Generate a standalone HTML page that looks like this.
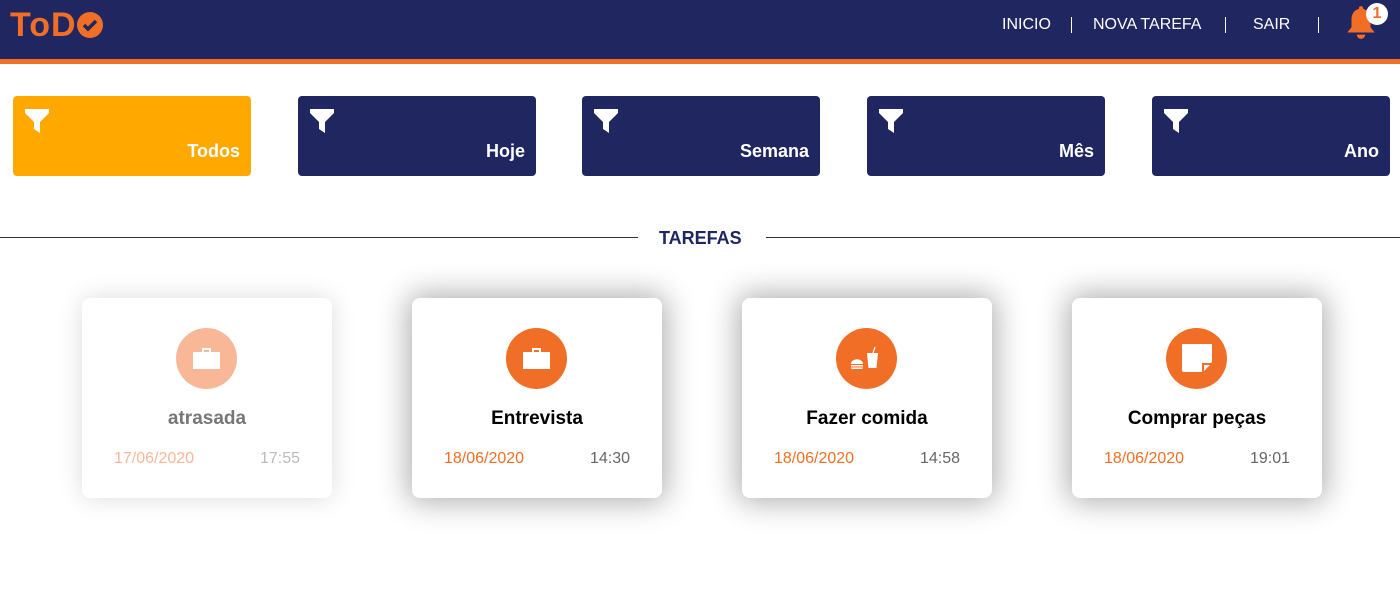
<!DOCTYPE html>
<html><head><meta charset="utf-8"><style>
*{margin:0;padding:0;box-sizing:border-box}
body{width:1400px;height:593px;background:#fff;font-family:"Liberation Sans",sans-serif;position:relative;overflow:hidden}
.hdr{position:absolute;left:0;top:0;width:1400px;background:#1f2660;border-bottom:5px solid #f06e26;height:64px}
.logo{position:absolute;left:10px;top:6px;font-size:34px;font-weight:bold;color:#f06e26;letter-spacing:1px}
.nav{position:absolute;top:16px;color:#fff;font-size:16px}
.sep{position:absolute;top:17px;width:1px;height:16px;background:#fff}
.f{position:absolute;top:96px;width:238px;height:80px;background:#1f2660;border-radius:4px;color:#fff;font-weight:bold;font-size:18px}
.f span{position:absolute;right:11px;bottom:14px}
.f svg{position:absolute;left:11px;top:12px}
.line{position:absolute;top:237px;height:1px;background:#333}
.card{position:absolute;top:298px;width:250px;height:200px;background:#fff;border-radius:8px;box-shadow:0 0 30px 4px rgba(0,0,0,.32);text-align:center}
.card .c{position:absolute;left:94px;top:30px;width:61px;height:61px;border-radius:50%;background:#f06e26}
.card .c svg{position:absolute;left:15px;top:15px}
.card h3{position:absolute;left:0;right:0;top:110px;font-size:19px;color:#000}
.card .d{position:absolute;left:32px;top:152px;font-size:16px;color:#f06e26}
.card .t{position:absolute;right:32px;top:152px;font-size:16px;color:#666}
</style></head><body>
<div class="hdr">
<div class="logo">ToD<svg width="26" height="26" viewBox="0 0 26 26" style="vertical-align:-2px"><circle cx="13" cy="13" r="13" fill="#f06e26"/><path d="M7 13l4 4 8-8" stroke="#1f2660" stroke-width="3.5" fill="none"/></svg></div>
<div class="nav" style="left:1002px">INICIO</div><div class="sep" style="left:1071px"></div>
<div class="nav" style="left:1093px">NOVA TAREFA</div><div class="sep" style="left:1225px"></div>
<div class="nav" style="left:1253px">SAIR</div><div class="sep" style="left:1318px"></div>
<svg style="position:absolute;left:1343px;top:4px" width="36" height="38" viewBox="0 0 32 36"><path d="M16 2c-1.5 0-2 1-2 2.5C9 6 7 10 7 15v7l-4 5h26l-4-5v-7c0-5-2-9-7-10.5C18 3 17.5 2 16 2z" fill="#f06e26"/><path d="M12 29a4 4 0 0 0 8 0z" fill="#f06e26"/></svg>
<div style="position:absolute;left:1366px;top:3px;width:22px;height:22px;border-radius:50%;background:#fff;color:#f06e26;font-weight:bold;font-size:16px;text-align:center;line-height:22px">1</div>
</div>
<div class="f" style="left:13px;background:#ffa800"><svg width="26" height="26" viewBox="0 0 26 26"><path d="M1 1h24v4l-9 9v11l-6-4v-7L1 5z" fill="#fff"/></svg><span>Todos</span></div>
<div class="f" style="left:298px"><svg width="26" height="26" viewBox="0 0 26 26"><path d="M1 1h24v4l-9 9v11l-6-4v-7L1 5z" fill="#fff"/></svg><span>Hoje</span></div>
<div class="f" style="left:582px"><svg width="26" height="26" viewBox="0 0 26 26"><path d="M1 1h24v4l-9 9v11l-6-4v-7L1 5z" fill="#fff"/></svg><span>Semana</span></div>
<div class="f" style="left:867px"><svg width="26" height="26" viewBox="0 0 26 26"><path d="M1 1h24v4l-9 9v11l-6-4v-7L1 5z" fill="#fff"/></svg><span>Mês</span></div>
<div class="f" style="left:1152px"><svg width="26" height="26" viewBox="0 0 26 26"><path d="M1 1h24v4l-9 9v11l-6-4v-7L1 5z" fill="#fff"/></svg><span>Ano</span></div>
<div class="line" style="left:0;width:638px"></div>
<div style="position:absolute;left:659px;top:228px;font-size:18px;font-weight:bold;color:#1f2660">TAREFAS</div>
<div class="line" style="left:766px;width:634px"></div>

<div class="card" style="left:82px;box-shadow:0 0 25px rgba(0,0,0,.14)"><div class="c" style="background:#f8b796"><svg width="31" height="31" viewBox="0 0 31 31"><path d="M11 5h9v4h-2v-2h-5v2h-2z M2 9h27v17H2z" fill="#fff"/></svg></div><h3 style="color:#777">atrasada</h3><div class="d" style="color:#f8b796">17/06/2020</div><div class="t" style="color:#bbb">17:55</div></div>
<div class="card" style="left:412px"><div class="c"><svg width="31" height="31" viewBox="0 0 31 31"><path d="M11 5h9v4h-2v-2h-5v2h-2z M2 9h27v17H2z" fill="#fff"/></svg></div><h3>Entrevista</h3><div class="d">18/06/2020</div><div class="t">14:30</div></div>
<div class="card" style="left:742px"><div class="c"><svg width="31" height="31" viewBox="0 0 31 31"><path d="M16 10h11l-1.5 15h-8z" fill="#fff"/><path d="M22 10l2-6" stroke="#fff" stroke-width="1.2"/><path d="M0 21a5 4 0 0 1 12 0z M0 22h12v1.5H0z M0 24.5h12a2 1.5 0 0 1-2 1.5H2a2 1.5 0 0 1-2-1.5z" fill="#fff"/></svg></div><h3>Fazer comida</h3><div class="d">18/06/2020</div><div class="t">14:58</div></div>
<div class="card" style="left:1072px"><div class="c"><svg width="31" height="31" viewBox="0 0 31 31"><path d="M1 1h30v18l-1 1h-9v9H2l-1-1z" fill="#fff"/><path d="M23 22h6l-6 6z" fill="#fff"/></svg></div><h3>Comprar peças</h3><div class="d">18/06/2020</div><div class="t">19:01</div></div>
</body></html>
